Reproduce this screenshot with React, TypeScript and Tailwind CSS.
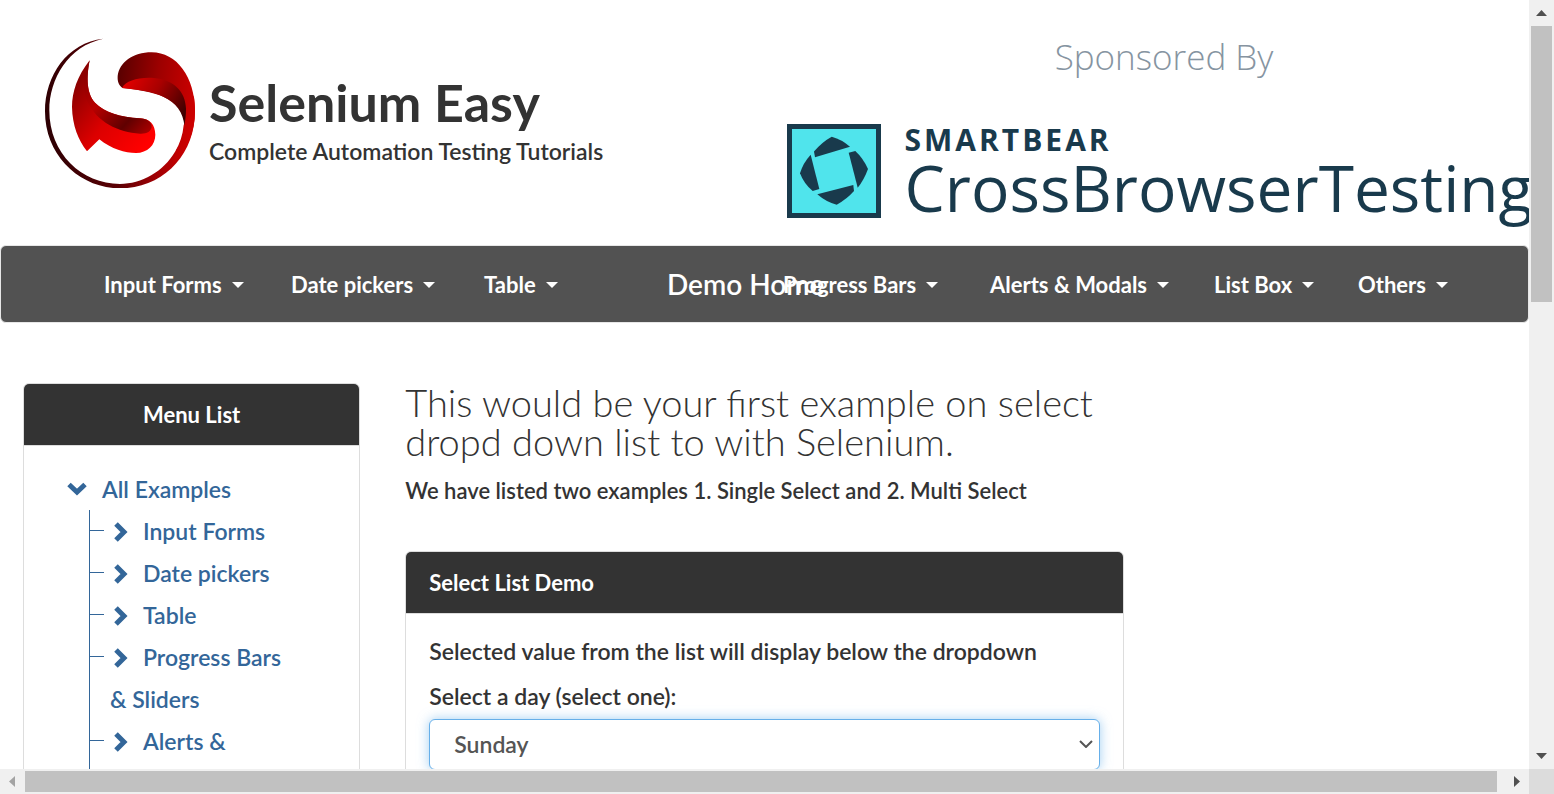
import React from "react";

const leftMenus = ["Input Forms", "Date pickers", "Table"];
const rightMenus = ["Progress Bars", "Alerts & Modals", "List Box", "Others"];
const examples = ["Input Forms", "Date pickers", "Table", "Progress Bars & Sliders", "Alerts & Modals"];
const days = ["Sunday", "Monday", "Tuesday", "Wednesday", "Thursday", "Friday", "Saturday"];

function Logo() {
  return (
    <svg viewBox="45 38 450 450" className="size-[150px] shrink-0" aria-hidden="true">
      <defs>
        <linearGradient id="ring" x1="45" y1="300" x2="495" y2="260" gradientUnits="userSpaceOnUse">
          <stop offset="0" stopColor="#2c0003" />
          <stop offset="0.45" stopColor="#5c0004" />
          <stop offset="0.7" stopColor="#a00004" />
          <stop offset="1" stopColor="#d40000" />
        </linearGradient>
        <linearGradient id="cap" x1="262" y1="170" x2="495" y2="200" gradientUnits="userSpaceOnUse">
          <stop offset="0" stopColor="#5a0000" />
          <stop offset="0.5" stopColor="#9c0000" />
          <stop offset="1" stopColor="#cc0000" />
        </linearGradient>
        <linearGradient id="capFold" x1="290" y1="170" x2="465" y2="270" gradientUnits="userSpaceOnUse">
          <stop offset="0" stopColor="#e00000" />
          <stop offset="0.45" stopColor="#a80000" />
          <stop offset="1" stopColor="#3a0000" />
        </linearGradient>
        <linearGradient id="tail" x1="120" y1="200" x2="340" y2="370" gradientUnits="userSpaceOnUse">
          <stop offset="0" stopColor="#8c0000" />
          <stop offset="0.5" stopColor="#dc0000" />
          <stop offset="1" stopColor="#ff0000" />
        </linearGradient>
        <linearGradient id="tailFold" x1="170" y1="140" x2="360" y2="310" gradientUnits="userSpaceOnUse">
          <stop offset="0" stopColor="#8a0000" />
          <stop offset="0.35" stopColor="#b80000" />
          <stop offset="0.75" stopColor="#600000" />
          <stop offset="1" stopColor="#a40000" />
        </linearGradient>
      </defs>
      <path
        fill="url(#ring)"
        d="M220 40C112 52 45 150 45 258C45 392 150 489 270 489C400 489 495 388 495 258C495 240 494 225 491 210L461 300C458 330 450 355 436 378C400 440 335 476 270 476C155 476 58 385 58 255C58 160 115 62 220 40Z"
      />
      <path
        fill="url(#cap)"
        d="M278 188C266 180 262 168 263 152C268 112 308 81 365 81C440 81 495 155 495 258C495 320 470 380 425 420L440 372C456 350 464 325 463 295C460 230 400 200 278 188Z"
      />
      <path
        fill="url(#capFold)"
        d="M276 188C288 166 325 155 372 158C432 163 467 200 468 250C468 268 466 285 463 300C460 262 438 232 400 214C365 198 330 194 276 188Z"
      />
      <path
        fill="url(#tail)"
        d="M179 105C142 152 126 200 126 245C127 300 145 345 171 378L208 342C245 372 285 383 318 383C352 382 376 360 376 328C375 298 360 280 330 279C270 275 225 262 195 232C165 200 172 140 179 105Z"
      />
      <path
        fill="url(#tailFold)"
        d="M179 105C162 140 155 190 172 228C200 290 265 322 330 325C350 326 363 318 365 305C366 290 350 279 330 279C270 275 225 262 195 232C165 200 172 140 179 105Z"
      />
    </svg>
  );
}

function SponsorMark() {
  return (
    <svg viewBox="0 0 94 94" className="size-[94px] shrink-0" aria-hidden="true">
      <rect width="94" height="94" fill="#193a4c" />
      <rect x="5" y="5" width="84" height="84" fill="#50e4ec" />
      <g fill="#193a4c">
        <path d="M27 27.5Q35 18 44.7 12.7Q55 15.5 63 22.7L28 33.3Z" />
        <path d="M61.7 28.7L68.3 27Q76 34 81 45Q77 56 70.7 63.7Z" />
        <path d="M66.3 61L67 67Q60 75 49.7 80.7Q39 78 30.3 70.3Z" />
        <path d="M23.7 30.7Q16 39 13 49.3Q17 60 25.7 67L32.3 65Z" />
      </g>
    </svg>
  );
}

function Caret() {
  return <span className="border-x-6 border-t-6 border-x-transparent border-t-white" />;
}

function NavItem({ label }: { label: string }) {
  return (
    <li>
      <button type="button" className="flex items-center gap-[10px] whitespace-nowrap text-[22px] font-bold leading-[30px]">
        {label}
        <Caret />
      </button>
    </li>
  );
}

function Chevron({ down = false }: { down?: boolean }) {
  return down ? (
    <svg viewBox="0 0 20 20" className="mr-[15px] inline-block size-5 align-[-1px]" aria-hidden="true">
      <path d="M2 5.500L10 13L18 5.500" fill="none" stroke="currentColor" strokeWidth="5" />
    </svg>
  ) : (
    <svg viewBox="0 0 20 20" className="mr-[13px] inline-block size-5 align-[-2px]" aria-hidden="true">
      <path d="M6 2L14 10L6 18" fill="none" stroke="currentColor" strokeWidth="5" />
    </svg>
  );
}

function Arrow({ points, muted = false }: { points: string; muted?: boolean }) {
  return (
    <svg viewBox="0 0 25 25" className="size-[25px] shrink-0" aria-hidden="true">
      <polygon points={points} fill={muted ? "#a3a3a3" : "#505050"} />
    </svg>
  );
}

export default function App() {
  return (
    <div className="grid h-screen grid-cols-[minmax(0,1fr)_25px] grid-rows-[minmax(0,1fr)_25px] bg-white font-[Lato,sans-serif] text-[23px] font-semibold leading-[30px] text-[#333]">
      <div className="overflow-hidden">
        <header className="grid h-[245px] grid-cols-2">
          <div className="flex gap-[14px] pl-[45px] pt-[38px]">
            <Logo />
            <div className="pt-[34px]">
              <h1 className="whitespace-nowrap text-[52px] font-bold leading-[60px]">Selenium Easy</h1>
              <p className="whitespace-nowrap pt-1">Complete Automation Testing Tutorials</p>
            </div>
          </div>
          <a href="#sponsor" className="block w-[777px] pl-[22px] pt-8 font-['Open_Sans',sans-serif] text-[#193a4c]">
            <p className="text-center text-[35px] font-light leading-[50px] text-[#8694a1]">Sponsored By</p>
            <div className="flex gap-6 pt-[42px]">
              <SponsorMark />
              <div>
                <p className="text-[30px] font-bold leading-[32px] tracking-widest">SMARTBEAR</p>
                <p className="whitespace-nowrap text-[64px] font-normal leading-[64px]">CrossBrowserTesting</p>
              </div>
            </div>
          </a>
        </header>

        <nav className="relative grid h-[78px] grid-cols-[679px_1fr] items-center rounded-md border border-[#e7e7e7] bg-[#525252] pl-[103px] pt-0.5 text-white">
          <ul className="grid grid-cols-[187px_193px_auto]">
            {leftMenus.map((label) => (
              <NavItem key={label} label={label} />
            ))}
          </ul>
          <ul className="grid grid-cols-[207px_224px_144px_auto]">
            {rightMenus.map((label) => (
              <NavItem key={label} label={label} />
            ))}
          </ul>
          <a href="#home" className="absolute inset-y-0 left-[666px] flex items-center text-[28px]">
            Demo Home
          </a>
        </nav>

        <div className="grid grid-cols-4 pt-[60px]">
          <aside className="pl-[23px] pr-[22px]">
            <section className="overflow-hidden rounded-md border border-[#ddd]">
              <h2 className="border-b border-[#ddd] bg-[#333] pb-[15px] pt-4 text-center text-[22px] font-bold text-white">Menu List</h2>
              <div className="py-[22px] pl-[43px] pr-16 leading-[42px] text-[#336699]">
                <a href="#all" className="whitespace-nowrap">
                  <Chevron down />
                  All Examples
                </a>
                <ul className="ml-[22px] border-l border-[#336699]">
                  {examples.map((label) => (
                    <li key={label} className="flex">
                      <span className="mt-5 h-px w-[14px] shrink-0 bg-[#336699]" />
                      <a href="#example" className="pl-1.5">
                        <Chevron />
                        {label}
                      </a>
                    </li>
                  ))}
                </ul>
              </div>
            </section>
          </aside>

          <main className="col-span-2 px-[23px]">
            <h2 className="whitespace-nowrap text-[38px] font-light leading-[39px]">
              This would be your first example on select
              <br />
              dropd down list to with Selenium.
            </h2>
            <p className="pt-[15px] text-[22px]">We have listed two examples 1. Single Select and 2. Multi Select</p>
            <section className="mt-[45px] overflow-hidden rounded-md border border-[#ddd]">
              <h3 className="border-b border-[#ddd] bg-[#333] px-[23px] pb-[15px] pt-4 text-[22px] font-bold text-white">Select List Demo</h3>
              <div className="px-[23px] py-[22px]">
                <p>Selected value from the list will display below the dropdown</p>
                <label htmlFor="day" className="block pb-2 pt-[15px]">
                  Select a day (select one):
                </label>
                <div className="relative">
                  <select
                    id="day"
                    defaultValue="Sunday"
                    className="h-[51px] w-full appearance-none rounded-md border border-[#66afe9] bg-white pb-0.5 pl-6 text-[#555] shadow-[0_0_12px_rgba(102,175,233,0.6)] outline-none"
                  >
                    {days.map((day) => (
                      <option key={day}>{day}</option>
                    ))}
                  </select>
                  <svg viewBox="0 0 14 8" className="pointer-events-none absolute right-[7px] top-[21px] h-2 w-[14px]" aria-hidden="true">
                    <path d="M1 1L7 7L13 1" fill="none" stroke="#555" strokeWidth="2" />
                  </svg>
                </div>
              </div>
            </section>
          </main>
        </div>
      </div>

      <div className="flex flex-col items-center bg-[#f0f0f0]">
        <Arrow points="7,16 18,16 12.5,10" />
        <div className="flex w-full flex-1 flex-col px-0.5 pt-px">
          <div className="h-[38.4%] bg-[#c1c1c1]" />
        </div>
        <Arrow points="7,9 18,9 12.5,15" />
      </div>
      <div className="flex bg-[#f0f0f0]">
        <Arrow points="15,7 15,18 9,12.5" muted />
        <div className="flex-1 py-0.5">
          <div className="h-full w-[99.5%] bg-[#c1c1c1]" />
        </div>
        <Arrow points="10,7 10,18 16,12.5" />
      </div>
      <div className="bg-[#dcdcdc]" />
    </div>
  );
}
